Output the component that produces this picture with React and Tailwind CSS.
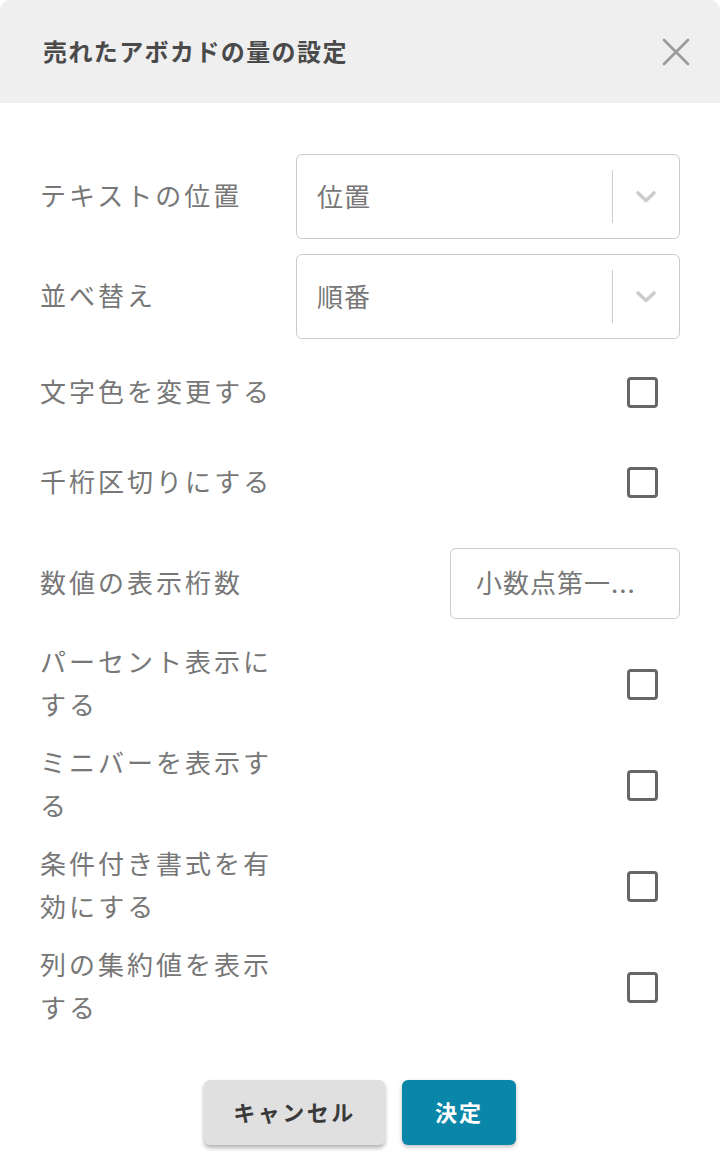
const font = {
  fontFamily: '"Noto Sans CJK JP", "Noto Sans", sans-serif',
};

function Checkbox() {
  return (
    <span className="block h-[31px] w-[31px] rounded-[4px] border-[3px] border-[#666666] bg-white" />
  );
}

function SelectBox({ value }) {
  return (
    <div className="flex h-[85px] w-[384px] items-center rounded-[6px] border border-[#cccccc] bg-white">
      <span className="mb-[3px] flex-1 pl-[20px] text-[26px] tracking-[1px] text-[#777777]">
        {value}
      </span>
      <span className="h-[53px] w-px bg-[#cccccc]" />
      <span className="flex w-[66px] items-center justify-center text-[#cccccc]">
        <svg width="22" height="14" viewBox="0 0 22 14">
          <path d="M3 3L11 10.5L19 3" stroke="currentColor" strokeWidth="3.6" strokeLinecap="round" strokeLinejoin="round" fill="none" />
        </svg>
      </span>
    </div>
  );
}

function Row({ label, children, className }) {
  return (
    <div className={["flex items-center justify-between", className].join(" ")}>
      <div className="mb-[4px] w-[240px] text-[26px] leading-[43px] tracking-[3px] text-[#777777]">
        {label}
      </div>
      {children}
    </div>
  );
}

export default function App() {
  return (
    <div className="min-h-[1160px] bg-white" style={font}>
      <div className="flex h-[103px] items-center justify-between rounded-t-[10px] bg-[#efefef] pl-[43px] pr-[30px]">
        <h1 className="mb-[2px] text-[24px] font-bold tracking-[1.4px] text-[#4a4a4a]">
          売れたアボカドの量の設定
        </h1>
        <svg width="28" height="28" viewBox="0 0 28 28" className="text-[#9a9a9a]">
          <path d="M2 2L26 26M26 2L2 26" stroke="currentColor" strokeWidth="2.6" strokeLinecap="round" fill="none" />
        </svg>
      </div>

      <div className="flex flex-col px-[40px] pt-[51px]">
        <Row label="テキストの位置" className="h-[85px]">
          <SelectBox value="位置" />
        </Row>
        <Row label="並べ替え" className="mt-[15px] h-[85px]">
          <SelectBox value="順番" />
        </Row>
        <Row label="文字色を変更する" className="mt-[10px] h-[86px] pr-[22px]">
          <Checkbox />
        </Row>
        <Row label="千桁区切りにする" className="mt-[4px] h-[86px] pr-[22px]">
          <Checkbox />
        </Row>
        <Row label="数値の表示桁数" className="mt-[15px] h-[86px]">
          <div className="flex h-[71px] w-[230px] items-center rounded-[6px] border border-[#cccccc] px-[25px] pb-[3px] text-[26px] tracking-[1px] text-[#777777]">
            小数点第一...
          </div>
        </Row>
        <Row label="パーセント表示にする" className="mt-[15px] h-[86px] pr-[22px]">
          <Checkbox />
        </Row>
        <Row label="ミニバーを表示する" className="mt-[15px] h-[86px] pr-[22px]">
          <Checkbox />
        </Row>
        <Row label="条件付き書式を有効にする" className="mt-[15px] h-[86px] pr-[22px]">
          <Checkbox />
        </Row>
        <Row label="列の集約値を表示する" className="mt-[15px] h-[86px] pr-[22px]">
          <Checkbox />
        </Row>

        <div className="mt-[50px] flex justify-center gap-[17px]">
          <button
            type="button"
            className="h-[65px] w-[181px] rounded-[6px] bg-[#e0e0e0] pb-[3px] text-[22px] font-bold tracking-[2.5px] text-[#3a3a3a] shadow-[0_3px_4px_rgba(0,0,0,0.3)]"
          >
            キャンセル
          </button>
          <button
            type="button"
            className="h-[65px] w-[114px] rounded-[6px] bg-[#0a87a8] pb-[3px] text-[22px] font-bold tracking-[2px] text-white shadow-[0_2px_4px_rgba(0,0,0,0.25)]"
          >
            決定
          </button>
        </div>
      </div>
    </div>
  );
}
